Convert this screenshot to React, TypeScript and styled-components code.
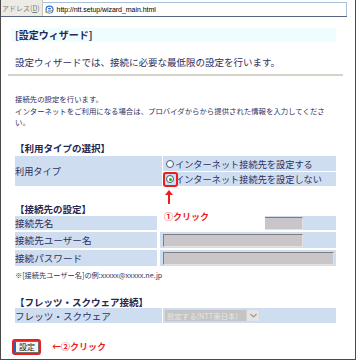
import styled, { createGlobalStyle } from "styled-components";

const Global = createGlobalStyle`
  html, body {
    margin: 0;
    padding: 0;
    background: #ffffff;
  }
  body {
    font-family: "Noto Sans CJK JP", "DejaVu Sans", sans-serif;
  }
`;

const IeIcon = () => (
  <svg width="9" height="9" viewBox="0 0 10 10">
    <circle cx="5" cy="5" r="4.5" fill="#2d6fd1" />
    <path d="M2.3 5.4h5.4c0-1.8-1.1-2.9-2.7-2.9S2.3 3.7 2.3 5.3s1.2 2.8 2.8 2.8c1 0 1.8-.4 2.3-1.2" fill="none" stroke="#ffffff" strokeWidth="1.2" />
    <path d="M0.6 7.2C-.2 9.4 3 8.6 6.6 5.6" fill="none" stroke="#f0b400" strokeWidth="0.8" />
  </svg>
);

const UpArrow = () => (
  <svg width="8" height="14" viewBox="0 0 8 14">
    <polygon points="4,0 8,5 0,5" fill="#ee1c1c" />
    <rect x="3" y="4" width="2" height="10" fill="#ee1c1c" />
  </svg>
);

const Chevron = () => (
  <svg width="7" height="5" viewBox="0 0 7 5">
    <path d="M0.5 1l3 3 3-3" fill="none" stroke="#9a9a9a" strokeWidth="1.2" />
  </svg>
);

const App = () => {
  return (
    <Frame>
      <Global />
      <AddressBar>
        <AddrLabel>
          アドレス(<u>D</u>)
        </AddrLabel>
        <AddrField>
          <IeIcon />
          <Url>http://ntt.setup/wizard_main.html</Url>
        </AddrField>
      </AddressBar>

      <Content>
        <TitleBox>[設定ウィザード]</TitleBox>
        <Lead>設定ウィザードでは、接続に必要な最低限の設定を行います。</Lead>
        <Divider />
        <Note>
          接続先の設定を行います。
          <br />
          インターネットをご利用になる場合は、プロバイダからから提供された情報を入力してください。
        </Note>

        <Section $top={14.5}>【利用タイプの選択】</Section>
        <TypeGrid>
          <TypeLabel>利用タイプ</TypeLabel>
          <OptionCell>
            <Radio />
            インターネット接続先を設定する
          </OptionCell>
          <OptionCell>
            <Radio $checked />
            インターネット接続先を設定しない
          </OptionCell>
        </TypeGrid>

        <Section $top={17}>【接続先の設定】</Section>
        <ConnGrid>
          <Label>接続先名</Label>
          <FieldCell>
            <TextInput $w={140} />
          </FieldCell>
          <Label>接続先ユーザー名</Label>
          <FieldCell>
            <TextInput $w={140} />
          </FieldCell>
          <Label>接続パスワード</Label>
          <FieldCell>
            <TextInput $w={171} />
          </FieldCell>
        </ConnGrid>
        <Example>※[接続先ユーザー名]の例:xxxxx@xxxxx.ne.jp</Example>

        <Section $top={16}>【フレッツ・スクウェア接続】</Section>
        <FletsGrid>
          <Label>フレッツ・スクウェア</Label>
          <FieldCell>
            <Select>
              <SelectText>設定する(NTT東日本)</SelectText>
              <SelectArrow>
                <Chevron />
              </SelectArrow>
            </Select>
          </FieldCell>
        </FletsGrid>

        <SubmitRow>
          <Marked>
            <SubmitButton>設定</SubmitButton>
          </Marked>
          <Callout>←②クリック</Callout>
        </SubmitRow>
      </Content>

      <RadioMarker />
      <ArrowMark>
        <UpArrow />
      </ArrowMark>
      <ClickNote>①クリック</ClickNote>
    </Frame>
  );
};

export default App;

const textColor = "#2e2f5e";
const cellBlue = "#cedef0";

const Frame = styled.div`
  position: relative;
  width: 356px;
  height: 360px;
  box-sizing: border-box;
  border-left: 1px solid #4a4a4a;
  border-right: 1px solid #4a4a4a;
  border-bottom: 1px solid #4a4a4a;
  overflow: hidden;
  color: ${textColor};
`;

const AddressBar = styled.div`
  display: flex;
  width: 346px;
  height: 17px;
  box-sizing: border-box;
  border-bottom: 1px solid #56667e;
`;

const AddrLabel = styled.div`
  flex: none;
  padding: 0 2px 0 1px;
  background: #ecebe4;
  border-right: 1px solid #c9c7bc;
  font-size: 7px;
  line-height: 16px;
  color: #7c7c7c;
  white-space: nowrap;

  u {
    text-decoration: underline;
  }
`;

const AddrField = styled.div`
  flex: 1;
  display: flex;
  align-items: center;
  gap: 3px;
  margin-top: 2px;
  padding-left: 2px;
  background: #ffffff;
  border-top: 1px solid #a9c0dd;
  border-right: 1px solid #a9c0dd;
`;

const Url = styled.span`
  font-family: "Liberation Sans", Arial, sans-serif;
  font-size: 7px;
  color: #000000;
  letter-spacing: -0.05px;
`;

const Content = styled.div`
  display: flex;
  flex-direction: column;
  align-items: flex-start;
  padding: 0 19px 0 14px;
`;

const TitleBox = styled.div`
  align-self: stretch;
  margin: 11px 0 0 -4px;
  padding-left: 4px;
  height: 14px;
  background: #effdff;
  font-size: 10px;
  font-weight: 700;
  line-height: 14px;
  color: #24285a;
`;

const Lead = styled.div`
  margin-top: 14px;
  font-size: 9.5px;
  line-height: 12px;
  white-space: nowrap;
`;

const Divider = styled.div`
  align-self: stretch;
  margin: 6px -7px 0 -7px;
  height: 2px;
  background: #d6d3c9;
`;

const Note = styled.div`
  width: 316px;
  margin-top: 17px;
  font-size: 7.4px;
  line-height: 11.5px;
`;

const Section = styled.div<{ $top: number }>`
  margin-top: ${(p) => p.$top}px;
  font-size: 9.5px;
  font-weight: 700;
  line-height: 12px;
  color: #23264f;
  white-space: nowrap;
`;

const TypeGrid = styled.div`
  align-self: stretch;
  display: grid;
  grid-template-columns: 147px 1fr;
  grid-template-rows: 15px 14px;
  column-gap: 1px;
  row-gap: 1px;
  margin-top: 2px;
`;

const TypeLabel = styled.div`
  grid-row: 1 / span 2;
  display: flex;
  align-items: center;
  background: ${cellBlue};
  font-size: 9.2px;
  white-space: nowrap;
`;

const OptionCell = styled.div`
  display: flex;
  align-items: center;
  gap: 1px;
  padding-left: 3px;
  background: ${cellBlue};
  font-size: 9.2px;
  white-space: nowrap;
`;

const Radio = styled.span<{ $checked?: boolean }>`
  position: relative;
  flex: none;
  width: 8px;
  height: 8px;
  box-sizing: border-box;
  border: 1px solid #3e5878;
  border-radius: 50%;
  background: #ffffff;

  &::after {
    content: "";
    display: ${(p) => (p.$checked ? "block" : "none")};
    position: absolute;
    left: 1.5px;
    top: 1.5px;
    width: 3px;
    height: 3px;
    border-radius: 50%;
    background: #1fa52a;
  }
`;

const ConnGrid = styled.div`
  align-self: stretch;
  display: grid;
  grid-template-columns: 142px 1fr;
  grid-template-rows: 14px 16px 16px;
  column-gap: 3px;
  row-gap: 2px;
  margin-top: 1px;
`;

const FletsGrid = styled.div`
  align-self: stretch;
  display: grid;
  grid-template-columns: 147px 1fr;
  grid-template-rows: 15px;
  column-gap: 1px;
`;

const Label = styled.div`
  display: flex;
  align-items: center;
  background: ${cellBlue};
  font-size: 9.6px;
  white-space: nowrap;
`;

const FieldCell = styled.div`
  display: flex;
  align-items: center;
  padding-left: 3px;
  background: ${cellBlue};
`;

const TextInput = styled.div<{ $w: number }>`
  width: ${(p) => p.$w}px;
  height: 13px;
  box-sizing: border-box;
  background: #c9c5c9;
  border: 1px solid;
  border-color: #7e7e7e #e2e2e2 #e2e2e2 #7e7e7e;
`;

const Select = styled.div`
  display: flex;
  width: 96px;
  height: 13px;
  margin-left: -2px;
  box-sizing: border-box;
  border: 1px solid #d8d8d8;
  background: #c4c4c4;
`;

const SelectText = styled.div`
  flex: 1;
  padding-left: 2px;
  font-size: 7.4px;
  line-height: 11px;
  color: #e6e6e6;
  white-space: nowrap;
  overflow: hidden;
`;

const SelectArrow = styled.div`
  width: 12px;
  display: flex;
  align-items: center;
  justify-content: center;
  background: #e4e4e4;
  border-left: 1px solid #d0d0d0;
`;

const Example = styled.div`
  margin-top: 4px;
  font-size: 7.2px;
  line-height: 10px;
  white-space: nowrap;
`;

const SubmitRow = styled.div`
  display: flex;
  align-items: center;
  gap: 11px;
  margin: 16px 0 0 -3px;
`;

const Marked = styled.div`
  display: flex;
  border: 2px solid #ee1c1c;
  border-radius: 3px;
`;

const SubmitButton = styled.div`
  width: 25px;
  height: 12px;
  box-sizing: border-box;
  background: #f6f5f0;
  border: 1px solid #707070;
  border-left: 2px solid #2d5fb2;
  font-size: 8px;
  line-height: 10px;
  text-align: center;
  color: #202020;
`;

const Callout = styled.div`
  font-size: 9px;
  font-weight: 700;
  line-height: 12px;
  color: #ee1c1c;
  white-space: nowrap;
`;

const RadioMarker = styled.div`
  position: absolute;
  left: 162px;
  top: 172px;
  width: 15px;
  height: 15px;
  box-sizing: border-box;
  border: 2px solid #ee1c1c;
  border-radius: 3px;
`;

const ArrowMark = styled.div`
  position: absolute;
  left: 164px;
  top: 190px;
  display: flex;
`;

const ClickNote = styled.div`
  position: absolute;
  left: 158px;
  top: 209px;
  width: 106px;
  height: 22px;
  padding: 2px 0 0 5px;
  box-sizing: border-box;
  background: #ffffff;
  font-size: 9px;
  font-weight: 700;
  line-height: 12px;
  color: #ee1c1c;
  white-space: nowrap;
`;
